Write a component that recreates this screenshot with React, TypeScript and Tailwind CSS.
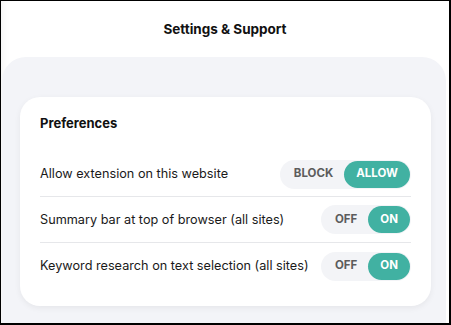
import React, { useState } from 'react';

type Pref = { id: string; label: string; off: string; on: string; value: boolean };

const PREFS: Pref[] = [
  { id: 'allow', label: 'Allow extension on this website', off: 'BLOCK', on: 'ALLOW', value: true },
  { id: 'summary', label: 'Summary bar at top of browser (all sites)', off: 'OFF', on: 'ON', value: true },
  { id: 'keyword', label: 'Keyword research on text selection (all sites)', off: 'OFF', on: 'ON', value: true },
];

const Toggle: React.FC<{ off: string; on: string; value: boolean; onChange: (v: boolean) => void }> = ({ off, on, value, onChange }) => (
  <div className="shrink-0 flex items-center h-[29px] rounded-full bg-[#f3f4f7] p-[1px]">
    <button
      onClick={() => onChange(false)}
      className={`h-[27px] rounded-full pl-[13px] pr-[11px] text-[11.5px] font-bold whitespace-nowrap ${
        !value ? 'bg-[#41b1a2] text-white' : 'text-[#5c5c5c]'
      }`}
    >
      {off}
    </button>
    <button
      onClick={() => onChange(true)}
      className={`h-[27px] rounded-full px-[12px] text-[11.5px] font-bold whitespace-nowrap ${
        value ? 'bg-[#41b1a2] text-white' : 'text-[#5c5c5c]'
      }`}
    >
      {on}
    </button>
  </div>
);

const App: React.FC = () => {
  const [prefs, setPrefs] = useState(PREFS);

  const setValue = (id: string, v: boolean) =>
    setPrefs(p => p.map(x => (x.id === id ? { ...x, value: v } : x)));

  return (
    <div
      className="w-[451px] h-[325px] bg-white border-l border-t border-r-2 border-b-2 border-black flex flex-col overflow-hidden shadow-[inset_8px_0_8px_-6px_rgba(0,0,0,0.05)]"
      style={{ fontFamily: 'Inter, "Noto Sans", sans-serif' }}
    >
      {/* Header */}
      <div className="h-[56px] flex items-center justify-center">
        <h1 className="text-[13.5px] font-bold text-[#111]">Settings &amp; Support</h1>
      </div>

      {/* Panel */}
      <div className="flex-1 ml-[1px] mr-[3px] rounded-t-[24px] bg-[#f3f4f8] pl-[18px] pr-[15px] pt-[40px]">
        <div className="bg-white rounded-[20px] shadow-[0_2px_6px_rgba(0,0,0,0.06)] px-[20px] pt-[18px] pb-[17px]">
          <h2 className="text-[13px] font-bold leading-[16px] text-[#111] mb-[21px]">Preferences</h2>
          <div className="flex flex-col">
            {prefs.map((p, i) => (
              <div
                key={p.id}
                className={`flex items-center justify-between gap-2 ${
                  i < prefs.length - 1 ? 'border-b border-[#e6e7ea]' : ''
                } ${i > 0 ? 'h-[46px]' : 'h-[45px]'}`}
              >
                <span className="text-[12.7px] text-[#1a1a1a] whitespace-nowrap">{p.label}</span>
                <Toggle off={p.off} on={p.on} value={p.value} onChange={v => setValue(p.id, v)} />
              </div>
            ))}
          </div>
        </div>
      </div>
    </div>
  );
};

export default App;
